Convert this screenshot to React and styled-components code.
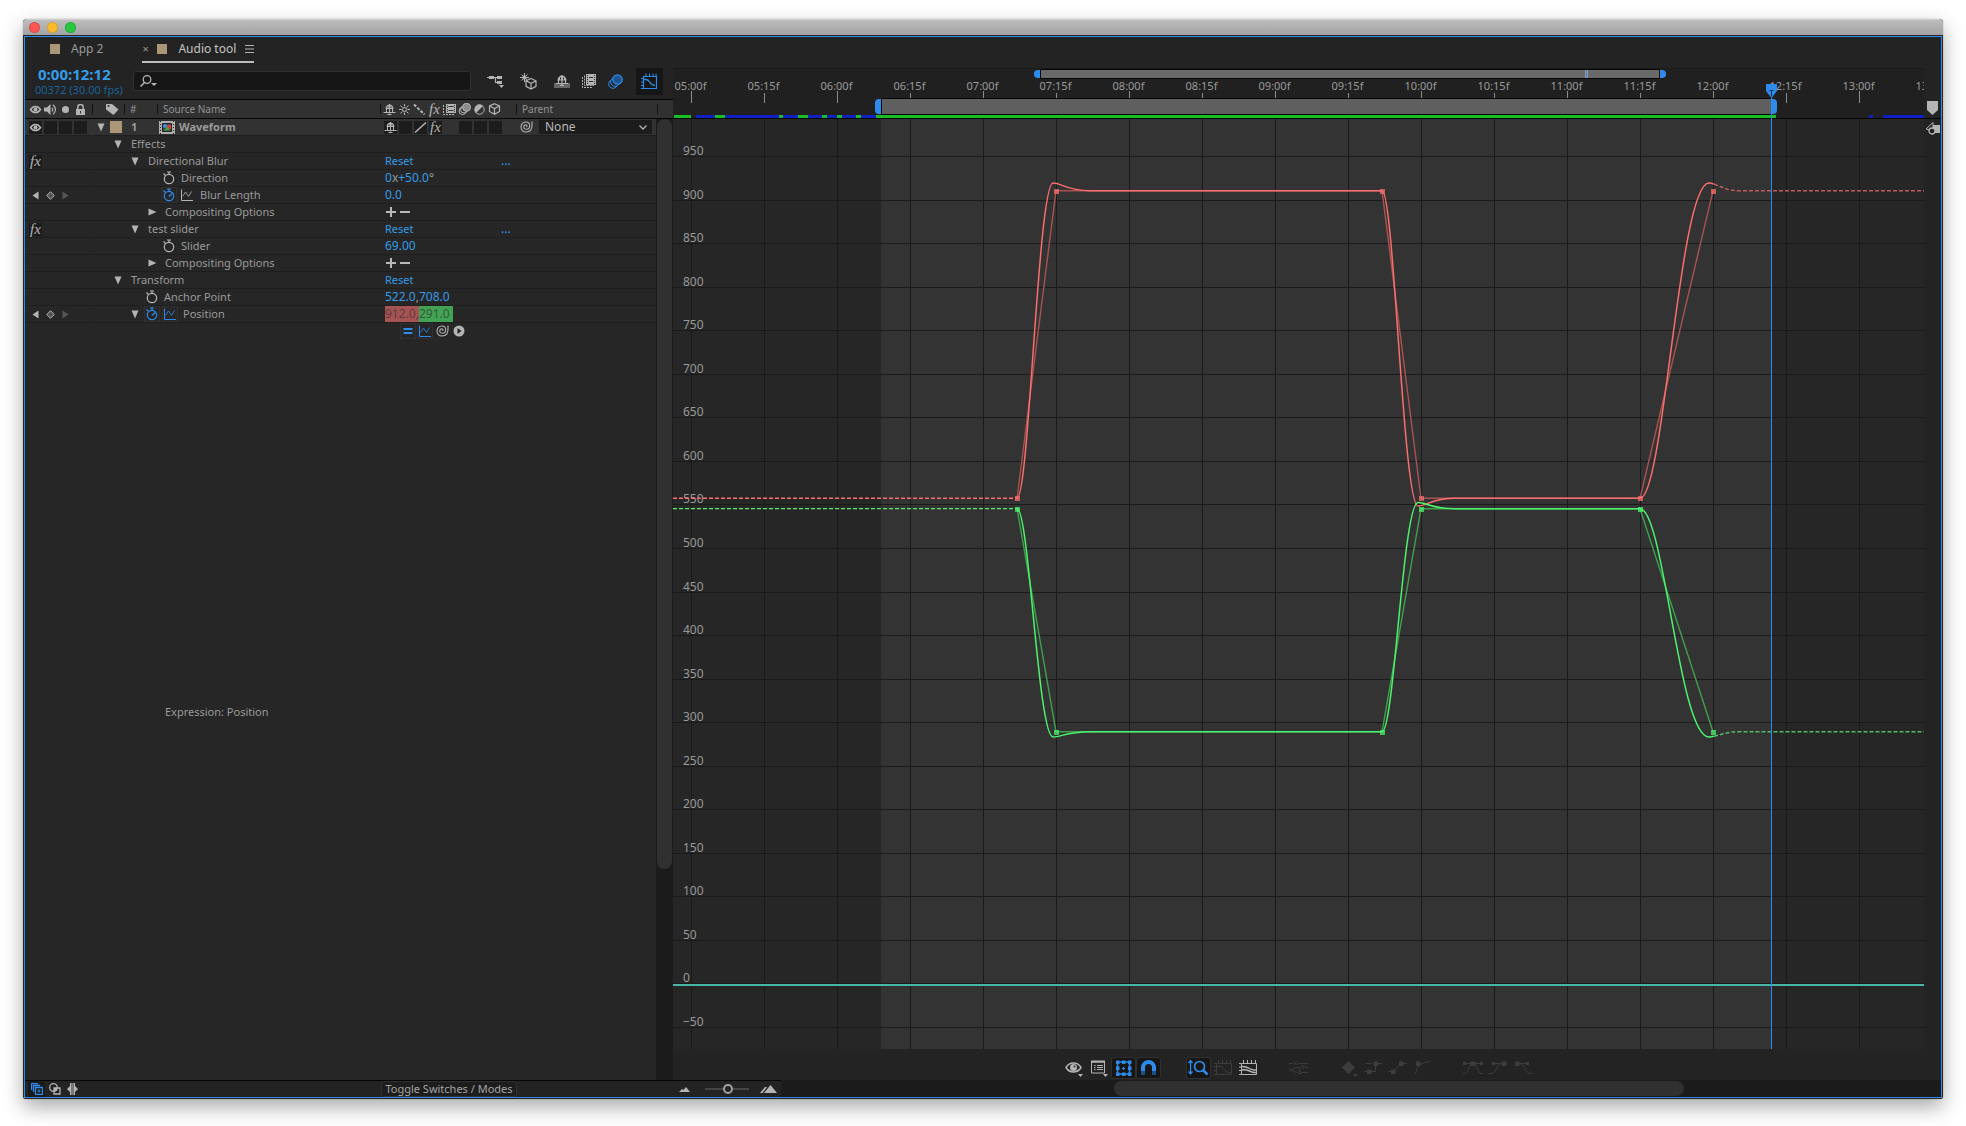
import React from "react";
import styled, { createGlobalStyle, css } from "styled-components";

const C = {
  blue: "#2d8ceb",
  value: "#349de8",
  icon: "#b4b4b4",
  text: "#9a9a9a",
  panel: "#232323",
  rows: "#262626",
  well: "#1d1d1d",
  label: "#ab9677",
};

const Global = createGlobalStyle`
  *, *::before, *::after { box-sizing: border-box; }
  body { margin: 0; background: #fff; font-family: "Noto Sans", "Open Sans", sans-serif; font-size: 12px; line-height: 16px; color: ${C.text}; }
  button, input, select { font: inherit; color: inherit; background: none; border: 0; padding: 0; margin: 0; }
  button { cursor: pointer; }
  svg { display: block; flex: none; }
`;

/* ---------- window ---------- */

const Page = styled.div`
  min-height: 100vh;
  display: flex;
  padding: 19px 23px 27px;
`;
const Win = styled.main`
  flex: 1;
  min-width: 0;
  display: flex;
  flex-direction: column;
  border-radius: 4px 4px 3px 3px;
  background: #2a2523;
  box-shadow: 0 0 1px rgba(0, 0, 0, 0.6), 0 8px 20px rgba(0, 0, 0, 0.34);
  overflow: hidden;
`;
const TitleBar = styled.header`
  height: 16px;
  display: flex;
  align-items: center;
  gap: 7px;
  padding-left: 6px;
  background: linear-gradient(#bdbdbd, #a2a2a2);
  border-top: 1px solid #cfcfcf;
`;
const Light = styled.button`
  width: 11px;
  height: 11px;
  border-radius: 50%;
  background: ${(p) => p.$c};
  box-shadow: inset 0 0 0 1px rgba(0, 0, 0, 0.14);
`;
const Panel = styled.section`
  flex: 1;
  display: flex;
  flex-direction: column;
  margin: 1px;
  border: 1px solid ${C.blue};
  background: ${C.panel};
  min-width: 0;
`;

/* ---------- tabs ---------- */

const Tabs = styled.nav`
  height: 26px;
  display: flex;
  align-items: flex-start;
  padding: 0 0 0 25px;
  gap: 39px;
`;
const Tab = styled.div`
  height: 26px;
  display: flex;
  align-items: center;
  color: ${(p) => (p.$on ? "#c4c4c4" : C.text)};
  border-bottom: 2px solid ${(p) => (p.$on ? "#bdbdbd" : "transparent")};
`;
const TabName = styled.button`
  display: flex;
  align-items: center;
  gap: 11px;
`;
const TabClose = styled.button`
  width: 15px;
  text-align: left;
  font-size: 11px;
  color: ${C.text};
`;
const TabMenu = styled.button`
  margin-left: 9px;
`;
const Swatch = styled.span`
  width: ${(p) => p.$s}px;
  height: ${(p) => p.$s}px;
  background: ${C.label};
  flex: none;
`;

/* ---------- body split ---------- */

const Body = styled.div`
  flex: 1;
  display: flex;
  min-height: 0;
`;
const Left = styled.div`
  width: 648px;
  flex: none;
  display: flex;
  flex-direction: column;
`;
const Right = styled.div`
  flex: 1;
  min-width: 0;
  display: flex;
  padding-top: 5px;
`;

/* ---------- left top tools ---------- */

const Tools = styled.div`
  height: 36px;
  display: flex;
  align-items: flex-start;
  padding-left: 10px;
`;
const Clock = styled.div`
  width: 98px;
  padding-top: 2px;
`;
const Timecode = styled.button`
  display: block;
  font-size: 15px;
  line-height: 18px;
  font-weight: 700;
  padding-left: 3px;
  color: ${C.value};
`;
const Frames = styled.div`
  font-size: 11px;
  line-height: 14px;
  color: #1a6299;
  white-space: nowrap;
`;
const Search = styled.label`
  margin-top: 8px;
  width: 338px;
  height: 20px;
  display: flex;
  align-items: center;
  gap: 6px;
  padding-left: 6px;
  background: #161616;
  border: 1px solid #303030;
  border-radius: 3px;
`;
const SearchInput = styled.input`
  flex: 1;
  min-width: 0;
  outline: none;
`;
const ToolSet = styled.div`
  margin-left: auto;
  padding-right: 10px;
  display: flex;
  align-items: center;
  height: 36px;
`;
const Tool = styled.button`
  width: ${(p) => p.$w || 27}px;
  height: 27px;
  display: grid;
  place-items: center;
  background: ${(p) => (p.$on ? "#161616" : "none")};
  margin-left: ${(p) => p.$gap || 0}px;
`;

/* ---------- layer list ---------- */

const ListHead = styled.div`
  height: 20px;
  border-top: 1px solid #050505;
  border-bottom: 1px solid #050505;
  background: #313131;
  display: flex;
  align-items: center;
  font-size: 10px;
  color: #949494;
`;
const HeadCell = styled.div`
  width: ${(p) => p.$w}px;
  height: 10px;
  display: flex;
  align-items: center;
  padding-left: ${(p) => p.$pad || 0}px;
  gap: ${(p) => p.$gap || 0}px;
  border-right: 1px solid #121212;
  flex: none;
`;
const ListBody = styled.div`
  flex: 1;
  display: flex;
  background: ${C.rows};
`;
const Rows = styled.div`
  flex: 1;
  min-width: 0;
  display: flex;
  flex-direction: column;
  font-size: 11px;
`;
const Row = styled.div`
  height: 17px;
  display: flex;
  align-items: stretch;
  background: ${(p) => (p.$main ? "#323232" : "transparent")};
`;
const cell = css`
  display: flex;
  align-items: center;
  border-bottom: 1px solid #1e1e1e;
`;
const AV = styled.div`
  ${cell}
  width: 67px;
  margin-right: 1px;
  padding-left: 4px;
  gap: 2px;
  flex: none;
`;
const Tree = styled.div`
  ${cell}
  width: 290px;
  padding-left: ${(p) => 2 + p.$depth * 17}px;
  flex: none;
`;
const Values = styled.div`
  ${cell}
  flex: 1;
  padding-left: ${(p) => (p.$main ? 1 : 2)}px;
  white-space: nowrap;
`;
const Box = styled.button`
  width: 13px;
  height: 13px;
  display: grid;
  place-items: center;
  background: ${(p) => (p.$empty ? "transparent" : "#1c1c1c")};
  flex: none;
`;
const Switches = styled.div`
  display: flex;
  gap: 2px;
  width: 136px;
  flex: none;
`;
const Twirl = styled.button`
  width: 12px;
  height: 16px;
  display: grid;
  place-items: center;
  visibility: ${(p) => (p.$hide ? "hidden" : "visible")};
  flex: none;
`;
const PropIcon = styled.button`
  width: 16px;
  height: 16px;
  display: grid;
  place-items: center;
  margin-left: ${(p) => p.$ml}px;
  border: 1px solid ${(p) => (p.$boxed ? "#303030" : "transparent")};
  flex: none;
`;
const Name = styled.span`
  margin-left: ${(p) => p.$ml}px;
  font-weight: ${(p) => (p.$bold ? 700 : 400)};
  white-space: nowrap;
`;
const LayerNo = styled.span`
  width: 28px;
  margin-left: 9px;
  font-weight: 700;
`;
const Value = styled.button`
  font-size: 12px;
  color: ${C.value};
`;
const Reset = styled.button`
  width: 116px;
  text-align: left;
  color: ${C.value};
`;
const Dim = styled.span`
  font-size: 12px;
  color: ${C.text};
`;
const Tint = styled.button`
  width: 34px;
  height: 16px;
  line-height: 16px;
  font-size: 12px;
  background: ${(p) => p.$bg};
  color: ${(p) => p.$fg};
  text-align: left;
`;
const More = styled.button`
  font-size: 12px;
  color: ${C.value};
`;
const Fx = styled.span`
  font: italic 15px/13px "Liberation Serif", serif;
  color: ${C.icon};
`;
const ParentSelect = styled.select`
  appearance: none;
  width: 113px;
  height: 14px;
  line-height: 14px;
  padding-left: 6px;
  font-size: 12px;
  color: #b8b8b8;
  background: #1c1c1c;
  border-radius: 0;
`;
const SelectWrap = styled.label`
  margin-left: 6px;
  display: grid;
  align-items: center;
  & > * { grid-area: 1 / 1; }
  & > svg { justify-self: end; margin-right: 5px; pointer-events: none; }
`;
const ExprTools = styled.div`
  height: 17px;
  display: flex;
  align-items: flex-start;
  gap: 1px;
  padding-left: 375px;
`;
const Expression = styled.div`
  flex: 1;
  display: flex;
  align-items: center;
  padding: 4px 0 0 140px;
`;
const VTrack = styled.div`
  width: 17px;
  background: #1b1b1b;
  border-left: 1px solid #1b1b1b;
  flex: none;
`;
const VThumb = styled.div`
  width: 15px;
  height: 78%;
  border-radius: 8px;
  background: #303030;
`;

/* ---------- timeline ---------- */

const Timeline = styled.div`
  position: relative;
  flex: 1;
  min-width: 0;
  display: flex;
  flex-direction: column;
  overflow: hidden;
`;
const Ruler = styled.div`
  position: relative;
  height: 51px;
  background: #202020;
  border-top: 1px solid #1a1a1a;
  border-bottom: 1px solid #050505;
  display: flex;
  flex-direction: column;
`;
const Ticks = styled.svg`
  position: absolute;
  inset: 0;
`;
const Navigator = styled.div`
  height: 10px;
  display: flex;
  align-items: center;
  position: relative;
  padding-left: 361px;
`;
const NavBar = styled.div`
  width: 620px;
  height: 10px;
  background: #696969;
  border: 1px solid #050505;
  padding-left: 544px;
`;
const NavMark = styled.div`
  width: 3px;
  height: 8px;
  background: ${C.blue};
  border: solid #999;
  border-width: 0 1px;
`;
const Grip = styled.div`
  width: 6px;
  height: ${(p) => p.$h}px;
  background: ${C.blue};
  border-radius: ${(p) => (p.$end ? "0 4px 4px 0" : "4px 0 0 4px")};
`;
const Labels = styled.div`
  position: relative;
  height: 19px;
  display: flex;
  margin-left: -19px;
  font-size: 11px;
  line-height: 14px;
`;
const Label = styled.span`
  width: 73px;
  flex: none;
  text-align: center;
`;
const WorkArea = styled.div`
  position: relative;
  height: 16px;
  display: flex;
  align-items: center;
  padding-left: 202px;
`;
const WorkBar = styled.div`
  width: 890px;
  height: 17px;
  background: #5f5f5f;
  border: solid #050505;
  border-width: 1px 0 1px 1px;
`;
const Cache = styled.div`
  position: relative;
  height: 4px;
  padding-top: 1px;
  display: flex;
`;
const CacheRun = styled.div`
  height: 3px;
  flex: none;
  background: ${(p) => ({ g: "#17bf25", b: "#1020c4", n: "#202020" })[p.$k]};
`;
const Plot = styled.div`
  flex: 1;
  background: ${C.rows};
  overflow: hidden;
  min-height: 0;
`;
const GraphTools = styled.div`
  height: 31px;
  display: flex;
  justify-content: center;
  gap: 2px;
  padding-top: 9px;
  background: ${C.panel};
`;
const Slot = styled.button`
  width: 23px;
  height: 20px;
  border-radius: 2px;
  background: ${(p) => (p.$on ? "#161616" : "none")};
  box-shadow: ${(p) => (p.$on ? "0 0 0 1px #303030" : "none")};
`;
const Blank = styled.span`
  width: 23px;
`;
const Playhead = styled.svg`
  position: absolute;
  left: 1092px;
  top: 16px;
  height: 100%;
`;
const Side = styled.div`
  width: 17px;
  flex: none;
  display: flex;
  flex-direction: column;
  align-items: center;
`;
const SideTop = styled.div`
  width: 17px;
  height: 51px;
  display: flex;
  align-items: flex-end;
  justify-content: center;
  padding-bottom: 3px;
  border-bottom: 1px solid #050505;
`;
const SideBottom = styled.button`
  margin-top: 3px;
`;

/* ---------- footer ---------- */

const Footer = styled.footer`
  height: 17px;
  display: flex;
`;
const FootLeft = styled.div`
  width: 756px;
  flex: none;
  border-top: 1px solid #050505;
  background: ${C.panel};
  display: flex;
  align-items: center;
`;
const FootIcon = styled.button`
  width: 17px;
  height: 16px;
  display: grid;
  place-items: center;
  background: ${(p) => (p.$on ? "#1a1a1a" : "none")};
`;
const FootIcons = styled.div`
  width: 356px;
  padding-left: 3px;
  display: flex;
  gap: 1px;
`;
const ModeButton = styled.button`
  width: 136px;
  height: 16px;
  line-height: 14px;
  background: ${C.well};
  border: 1px solid #303030;
  border-radius: 3px;
  font-size: 11px;
  color: #a5a5a5;
  white-space: nowrap;
`;
const ZoomSet = styled.div`
  margin-left: 162px;
  display: flex;
  align-items: center;
`;
const ZoomRange = styled.input`
  appearance: none;
  width: 44px;
  height: 12px;
  margin: 0 11px 0 15px;
  &::-webkit-slider-runnable-track { height: 2px; background: #444; }
  &::-webkit-slider-thumb {
    appearance: none;
    width: 10px;
    height: 10px;
    margin-top: -4px;
    border: 2px solid #a0a0a0;
    border-radius: 50%;
    background: ${C.panel};
  }
`;
const HTrack = styled.div`
  flex: 1;
  background: #1b1b1b;
  padding: 1px 0 1px 333px;
`;
const HThumb = styled.div`
  width: 570px;
  height: 15px;
  border-radius: 8px;
  background: #303030;
`;

/* ---------- icons ---------- */

const Svg = ({ w = 13, h = 13, c = C.icon, children }) => (
  <svg width={w} height={h} viewBox={`0 0 ${w} ${h}`} fill="none" stroke={c} color={c} aria-hidden="true">
    {children}
  </svg>
);
const F = { fill: "currentColor", stroke: "none" };

const Eye = () => (
  <Svg w={13} h={11}>
    <path d="M1.500 5.500C4 1.500 9 1.500 11.500 5.500C9 9.500 4 9.500 1.500 5.500Z" strokeWidth="1.500" />
    <circle cx="6.500" cy="5.500" r="2" {...F} />
  </Svg>
);
const Speaker = () => (
  <Svg w={13} h={11}>
    <path d="M0 3.500h3L6.500 0v11L3 7.500H0z" {...F} />
    <path d="M8 3.500q1.500 2 0 4M9 .8q5 4.700 0 9.400" strokeWidth="1.200" />
  </Svg>
);
const Solo = () => <Svg h={11}><circle cx="6.500" cy="5.500" r="3.500" {...F} /></Svg>;
const Lock = () => (
  <Svg w={13} h={11}>
    <path d="M2 5h9v6H2z" {...F} />
    <path d="M3.800 5V3a2.700 2.500 0 0 1 5.400 0v2" strokeWidth="1.500" />
    <path d="M6.500 7v2.500" stroke="#313131" />
  </Svg>
);
const Tag = () => (
  <Svg w={14} h={12}>
    <path d="M1 1h6l6.500 5.500L8.500 12L1 6.500z" {...F} />
    <circle cx="3.500" cy="3" r="1" fill="#313131" stroke="none" />
  </Svg>
);
const Shy = () => (
  <Svg w={13} h={11}>
    <path d="M2.500 5a4 4.500 0 0 1 8 0z" {...F} />
    <path d="M6.500 0v9.500M3.500 5v3M9.500 5v3M.5 8.500h12M4.500 10.500h4" />
    <path d="M5 2.500v1.500M8 2.500v1.500" stroke="#262626" />
  </Svg>
);
const Sun = () => (
  <Svg w={13} h={11}>
    <circle cx="6.500" cy="5.500" r="2" />
    <path d="M6.500 0v2.500M6.500 8.500V11M1 5.500h2.500M9.500 5.500H12M2.500 1.500l2 2M10.500 1.500l-2 2M2.500 9.500l2-2M10.500 9.500l-2-2" />
  </Svg>
);
const DotLine = () => <Svg h={11}><path d="M1 .5l10.500 10" strokeWidth="2" strokeDasharray="3 1.500" /></Svg>;
const Slash = () => <Svg h={11}><path d="M1 10.500L12 .5" strokeWidth="1.500" /></Svg>;
const Film = () => (
  <Svg w={13} h={11}>
    <path d="M3 0h10v9H3z" {...F} />
    <path d="M.5 1v9.500H11" strokeDasharray="2 1" />
    <path d="M5.500 2.500h5M5.500 6.500h5" stroke="#313131" />
    <path d="M4.500 1v7M11.500 1v7" stroke="#313131" strokeDasharray="1 1" />
  </Svg>
);
const Blur = () => (
  <Svg w={13} h={12}>
    <circle cx="4.500" cy="8" r="3.500" /><circle cx="6" cy="6.500" r="3.500" />
    <circle cx="8.500" cy="4.300" r="4" fill="#8a8a8a" />
  </Svg>
);
const Half = () => (
  <Svg h={11}>
    <circle cx="6.500" cy="5.500" r="4.700" />
    <path d="M3 8.900A4.800 4.800 0 1 1 10 2.100z" {...F} />
  </Svg>
);
const Cube = () => (
  <Svg h={12}>
    <path d="M6.500 .7l5 2.300v5.500l-5 2.800l-5-2.800V3zM1.500 3l5 2.500l5-2.500M6.500 5.500v5.800" strokeWidth="1.200" />
  </Svg>
);
const Spiral = () => (
  <Svg w={13} h={12}>
    <path d="M12 .5v3.500C12 8.500 9.500 11 6 11C3 11 1 9 1 6C1 3 3.200 1 5.800 1C8.200 1 9.700 2.800 9.700 4.800C9.700 7 8.300 8.300 6.500 8.300C4.800 8.300 3.700 7.300 3.800 5.800C3.900 4.400 5 3.700 6 3.800C7 4 7.300 5 6.500 6" strokeWidth="1.100" />
  </Svg>
);
const Chevron = () => <Svg w={8} h={5}><path d="M.5 .5l3.500 3.500l3.500-3.500" strokeWidth="1.300" /></Svg>;
const TriDown = () => <Svg w={8} h={9}><path d="M.5 .5h7L4 8.500z" {...F} /></Svg>;
const TriRight = () => <Svg w={9} h={8}><path d="M.5 .5v7L8.500 4z" {...F} /></Svg>;
const Watch = ({ on }) => (
  <Svg w={14} h={14} c={on ? C.blue : C.icon}>
    <circle cx="7" cy="8" r="4.700" strokeWidth="1.200" />
    <path d="M5 1h4M7 1v2.500M1.500 2.500l2 2" strokeWidth="1.200" />
    {on && <path d="M7 8.500l3-3" strokeWidth="1.500" />}
  </Svg>
);
const MiniGraph = ({ on }) => (
  <Svg w={12} h={12} c={on ? C.blue : C.icon}>
    <path d="M.5 .5v11H12" />
    <path d="M1.500 7.500l3-4.500l3 4.500l3-5" strokeWidth="0.800" />
  </Svg>
);
const CompIcon = () => (
  <Svg w={16} h={13}>
    <path d="M0 0h16v13H0z" fill="#b0b0b0" stroke="none" />
    <path d="M1.500 0v13M14.500 0v13" stroke="#222" strokeDasharray="1 2" />
    <path d="M3.500 2.500h9v8h-9z" fill="#444" stroke="#222" />
    <circle cx="6" cy="5" r="2" fill="#3b8be8" stroke="none" />
    <path d="M8 4h4v4H8z" fill="#e03c3c" stroke="none" />
    <path d="M5 9.500l3-4l3 4z" fill="#36a83c" stroke="none" />
  </Svg>
);
const PlusMinus = () => (
  <Svg w={26} h={12} c="#b8b8b8"><path d="M1 6h10M6 1v10M15 6h10" strokeWidth="2" /></Svg>
);
const Equal = () => <Svg w={10} h={8} c={C.blue}><path d="M.5 2h9M.5 6h9" strokeWidth="2" /></Svg>;
const PlayDot = () => (
  <Svg w={12} h={12}><circle cx="6" cy="6" r="5.500" {...F} /><path d="M4.500 3v6l4-3z" fill="#222" stroke="none" /></Svg>
);
const KeyNavIcons = () => (
  <>
    <Box $empty aria-label="Previous keyframe"><Svg w={7} h={9}><path d="M6.500 .5v8L.5 4.500z" {...F} /></Svg></Box>
    <Box $empty aria-label="Toggle keyframe"><Svg w={9} h={9}><path d="M4.500 .7l3.800 3.800l-3.800 3.800L.7 4.500z" fill="#555" /></Svg></Box>
    <Box $empty aria-label="Next keyframe"><Svg w={7} h={9} c="#555"><path d="M.5 .5v8l6-4z" {...F} /></Svg></Box>
  </>
);

/* ---------- layer rows ---------- */

const Fold = ({ open, hide }) => (
  <Twirl $hide={hide} aria-label="Twirl">{open ? <TriDown /> : <TriRight />}</Twirl>
);
const ResetMore = ({ more }) => (
  <>
    <Reset>Reset</Reset>
    {more && <More aria-label="More">...</More>}
  </>
);

const PROPS = [
  { name: "Effects", depth: 1, open: true },
  { name: "Directional Blur", depth: 2, open: true, fx: true, value: <ResetMore more /> },
  { name: "Direction", depth: 3, watch: "off", value: <Value>0<Dim>x</Dim>+50.0<Dim>°</Dim></Value> },
  { name: "Blur Length", depth: 3, watch: "on", graph: "off", keys: true, value: <Value>0.0</Value> },
  { name: "Compositing Options", depth: 3, open: false, value: <PlusMinus /> },
  { name: "test slider", depth: 2, open: true, fx: true, value: <ResetMore more /> },
  { name: "Slider", depth: 3, watch: "off", value: <Value>69.00</Value> },
  { name: "Compositing Options", depth: 3, open: false, value: <PlusMinus /> },
  { name: "Transform", depth: 1, open: true, value: <ResetMore /> },
  { name: "Anchor Point", depth: 2, watch: "off", value: <><Value>522.0</Value><Dim>,</Dim><Value>708.0</Value></> },
  {
    name: "Position", depth: 2, open: true, watch: "on", graph: "on", keys: true,
    value: <><Tint $bg="#a65353" $fg="#5e3c3c">912.0,</Tint><Tint $bg="#43a355" $fg="#335c3b">291.0</Tint></>,
  },
];

const PropRow = ({ p }) => (
  <Row>
    <AV>
      {p.fx && <Box aria-label="Effect on"><Fx>fx</Fx></Box>}
      {p.keys && <KeyNavIcons />}
    </AV>
    <Tree $depth={p.depth}>
      <Fold open={p.open} hide={p.open === undefined} />
      {p.watch && <PropIcon $ml={3} $boxed={p.watch === "on"} aria-label="Stopwatch"><Watch on={p.watch === "on"} /></PropIcon>}
      {p.graph && <PropIcon $ml={2} $boxed={p.graph === "on"} aria-label="Show in graph"><MiniGraph on={p.graph === "on"} /></PropIcon>}
      <Name $ml={p.graph ? 5 : p.watch ? 4 : 7}>{p.name}</Name>
    </Tree>
    <Values>{p.value}</Values>
  </Row>
);

/* ---------- graph ---------- */

const STEP = 73;
const fx = (frame) => 18 + ((frame - 150) * STEP) / 15;
const gridY = (v) => Math.round(37 + (950 - v) * 0.871);
const curveY = (v) => 38.7 + (950 - v) * 0.871;

const LABELS = Array.from({ length: 18 }, (_, i) => {
  const s = 5 + Math.floor(i / 2);
  return `${String(s).padStart(2, "0")}:${i % 2 ? "15" : "00"}f`;
});

const FR = [217, 225, 292, 300, 345, 360];
const settle = (x, peak, rest) => `C${x + 8} ${peak} ${x + 14} ${rest} ${x + 37} ${rest}`;

function channel(low, high, over, under) {
  const [a, , c, , e, f] = FR.map(fx);
  const L = curveY(low);
  const H = curveY(high);
  const p1 = a + 36;
  const p2 = c + 36;
  const p3 = f - 4;
  return {
    solid:
      `M${a} ${L}C${a + 12} ${L} ${p1 - 15} ${over} ${p1} ${over}${settle(p1, over, H)}H${c}` +
      `C${c + 12} ${H} ${p2 - 15} ${under} ${p2} ${under}${settle(p2, under, L)}H${e}` +
      `C${e + 24} ${L} ${p3 - 30} ${over} ${p3} ${over}Q${p3 + 2} ${over} ${p3 + 5} ${over + (H - over) * 0.15}`,
    tail: `M${p3 + 5} ${over + (H - over) * 0.15}C${p3 + 14} ${over + (H - over) * 0.5} ${p3 + 18} ${H} ${p3 + 30} ${H}H3000`,
    head: `M0 ${L}H${a}`,
    keys: [low, high, high, low, low, high].map((v, i) => [fx(FR[i]), curveY(v)]),
  };
}
const RED = { ...channel(559, 912, 64, 387), hi: "#fa6e6e", lo: "#a85353", tail: "#bd5c5c" };
const GREEN = { ...channel(547, 291, 618, 383.5), hi: "#4cf26c", lo: "#3f9f50", tail: "#54b866" };
RED.tailPath = channel(559, 912, 64, 387).tail;
GREEN.tailPath = channel(547, 291, 618, 383.5).tail;

const Channel = ({ ch }) => (
  <g fill="none">
    <polyline points={ch.keys.map((k) => k.join(",")).join(" ")} stroke={ch.lo} strokeWidth="1.400" />
    <path d={ch.head} stroke={ch.hi} strokeWidth="1.300" strokeDasharray="4 2" />
    <path d={ch.tailPath} stroke={ch.tail} strokeWidth="1.500" strokeDasharray="4 2" />
    <path d={ch.solid} stroke={ch.hi} strokeWidth="1.500" />
    {ch.keys.map(([x, y]) => (
      <rect key={x} x={Math.round(x) - 2} y={Math.round(y) - 2} width="5" height="5" fill={ch.hi} fillOpacity="0.75" />
    ))}
  </g>
);

const Graph = () => (
  <svg width="100%" height="100%" role="img" aria-label="Value graph for Position">
    <rect x="208" y="0" width="890" height="100%" fill="#333" />
    {Array.from({ length: 30 }, (_, i) => (
      <rect key={i} x={18 + i * STEP} y="0" width="1" height="100%" fill="#1a1a1a" />
    ))}
    {Array.from({ length: 21 }, (_, i) => 950 - i * 50).map((v) => (
      <g key={v}>
        <rect x="0" y={gridY(v)} width="100%" height="1" fill="#1a1a1a" />
        <text x="10" y={gridY(v) - 1} fill="#999" fontSize="12">{v < 0 ? `−${-v}` : v}</text>
      </g>
    ))}
    <rect x="0" y="865" width="100%" height="2" fill="#48b5a6" />
    <Channel ch={RED} />
    <Channel ch={GREEN} />
  </svg>
);

const CACHE = [
  ["n", 1], ["g", 17], ["n", 5], ["b", 19], ["g", 10], ["b", 54], ["g", 4], ["b", 15], ["g", 10], ["b", 14], ["g", 5],
  ["b", 10], ["g", 5], ["b", 14], ["g", 5], ["b", 15], ["g", 900], ["n", 93], ["b", 4], ["n", 10], ["b", 400],
];

/* ---------- graph toolbar ---------- */

const caret = <path d="M16 16h5l-2.500 3z" {...F} />;
const frame = (
  <path d="M4.500 5.500h15v11h-15zM2 5.500h2.500M2 9h2.500M2 12.500h2.500M2 16.500h2.500M6.500 2v3M10.500 2v3M14.500 2v3M18.500 2v3" />
);
const handles = (x0, x1) => (
  <>
    <path d={`M${x0} 5.500H${x1}`} />
    <rect x={x0 - 1} y="4" width="3" height="3" {...F} />
    <rect x={x1 - 2} y="4" width="3" height="3" {...F} />
  </>
);
const GRAPH_TOOLS = [
  { t: "Show properties", d: <><path d="M4 9.500C7.500 3.500 15.500 3.500 19 9.500C15.500 15.500 7.500 15.500 4 9.500Z" strokeWidth="1.500" /><circle cx="11.500" cy="9.500" r="3.500" {...F} /><circle cx="12.500" cy="8.500" r="1" fill="#333" stroke="none" />{caret}</> },
  { t: "Graph type", d: <><path d="M4.500 4h13v11h-13z" /><path d="M4 3.500h14" strokeWidth="2" /><path d="M7 7.500h1.500M7 9.500h1.500M7 11.500h1.500M10 7.500h6M10 9.500h6M10 11.500h6" />{caret}</> },
  { t: "Transform box", on: 1, d: <><path d="M5.500 4h12v12h-12z" strokeWidth="1.500" />{[4, 10, 16].map((x) => [2.5, 8.5, 14.5].map((y) => (x === 10 && y === 8.5 ? null : <rect key={`${x}-${y}`} x={x} y={y} width="3.500" height="3.500" {...F} />)))}<path d="M10 10.500h3M11.500 9v3" /></> },
  { t: "Snap", on: 1, d: <><path d="M6 13V9.500a5.500 5.500 0 0 1 11 0V13" strokeWidth="4" /><path d="M6 13v4M17 13v4" stroke="#1b4f85" strokeWidth="4" /></> },
  null,
  { t: "Auto-zoom height", on: 1, d: <><path d="M3.500 3v12M1.500 5l2-2.500l2 2.500M1.500 13.500l2 2.500l2-2.500" strokeWidth="1.300" /><circle cx="12.500" cy="8.500" r="5" strokeWidth="1.700" /><path d="M16 12l4.500 4.500" strokeWidth="2.500" /></> },
  { t: "Fit selection", off: 1, d: <>{frame}<path d="M4.500 8.500h4q2 0 4 3t4 3h3" /></> },
  { t: "Fit all", d: <>{frame}<path d="M4.500 8.500q5 0 8 2t7 1.500M4.500 12q4-1 8 1t7 1.500" strokeWidth="1.500" /></> },
  null,
  { t: "Separate dimensions", off: 1, d: <><path d="M2 5.500h4M11 5.500h10M2 13.500q5-5 10-4h2M18 9.500h3M2 9.500q4 5 8 5M14 14.500h7" /><path d="M7 3l3 4M10 3l-3 4M14.500 7l1.500 2l1.500-2M16 9v2M11 12h3l-3 3.500h3" /></> },
  null,
  { t: "Edit keyframe", off: 1, d: <><path d="M11.500 3l6.500 6.500L11.500 16L5 9.500z" {...F} />{caret}</> },
  { t: "Hold", off: 1, d: <><path d="M4 5.500h5.500M7 13.500h6.500V5.500H20M2 13.500h3" /><rect x="5" y="11.500" width="4.500" height="4.500" {...F} /><rect x="11.500" y="3.500" width="4.500" height="4.500" {...F} /></> },
  { t: "Linear", off: 1, d: <><path d="M1 13.500h5L14.500 5.500H20" /><rect x="4" y="11.500" width="4.500" height="4.500" {...F} /><rect x="12" y="3.500" width="4.500" height="4.500" {...F} /></> },
  { t: "Auto Bezier", off: 1, d: <><path d="M3.500 16q1-12 15.500-12.500" /><rect x="4" y="3.500" width="4.500" height="4.500" {...F} /></> },
  null,
  { t: "Easy Ease", off: 1, d: <>{handles(2, 20)}<rect x="8.500" y="3.500" width="5" height="4.500" {...F} /><path d="M1 15.500h2c4 0 3-10 8-10s4 10 8 10h2" /></> },
  { t: "Easy Ease In", off: 1, d: <>{handles(6, 18)}<rect x="15" y="3.500" width="4.500" height="4.500" {...F} /><path d="M2 15.500h2c6 0 5-10 11-10" /></> },
  { t: "Easy Ease Out", off: 1, d: <>{handles(4, 16)}<rect x="3" y="3.500" width="4.500" height="4.500" {...F} /><path d="M20.500 15.500h-2c-6 0-5-10-11-10" /></> },
];

export default function App() {
  return (
    <>
      <Global />
      <Page>
        <Win>
          <TitleBar>
            <Light $c="#fc5753" aria-label="Close" />
            <Light $c="#fdbc2e" aria-label="Minimise" />
            <Light $c="#27c93f" aria-label="Zoom" />
          </TitleBar>
          <Panel>
            <Tabs>
              <Tab><TabName><Swatch $s={10} />App 2</TabName></Tab>
              <Tab $on>
                <TabClose aria-label="Close tab">×</TabClose>
                <TabName><Swatch $s={10} />Audio tool</TabName>
                <TabMenu aria-label="Panel menu"><Svg w={9} h={8}><path d="M0 .5h9M0 4h9M0 7.500h9" /></Svg></TabMenu>
              </Tab>
            </Tabs>
            <Body>
              <Left>
                <Tools>
                  <Clock>
                    <Timecode>0:00:12:12</Timecode>
                    <Frames>00372 (30.00 fps)</Frames>
                  </Clock>
                  <Search>
                    <Svg w={17} h={12}>
                      <circle cx="7" cy="4.500" r="3.800" strokeWidth="1.300" />
                      <path d="M4.500 7.500L.5 11.500" strokeWidth="1.500" />
                      <path d="M11 8h6l-3 3z" {...F} />
                    </Svg>
                    <SearchInput type="text" aria-label="Search layers" />
                  </Search>
                  <ToolSet>
                    <Tool $w={26} aria-label="Composition flowchart">
                      <Svg w={17} h={13}>
                        <path d="M0 2.500h11M8.500 2.500v5H11" strokeWidth="1.200" />
                        <path d="M2 1h5v3H2zM10 1h5v3h-5zM10 6h5v3h-5zM12 10h5l-2.500 3z" {...F} />
                      </Svg>
                    </Tool>
                    <Tool $w={40} aria-label="Draft 3D">
                      <Svg w={17} h={17}>
                        <path d="M4.500 0v9M0 4.500h9M1.500 1.500l6 6M7.500 1.500l-6 6" />
                        <circle cx="4.500" cy="4.500" r="2" {...F} />
                        <path d="M11 5.500l5 2.300v5.500l-5 2.800l-5-2.800V7.800zM6 7.800l5 2.500l5-2.500M11 10.300v5.800" strokeWidth="1.200" />
                      </Svg>
                    </Tool>
                    <Tool $w={28} aria-label="Hide shy layers">
                      <Svg w={16} h={13}>
                        <path d="M0 8h16v5H0z" fill="#666" stroke="none" />
                        <path d="M3.500 5.500a4.500 5 0 0 1 9 0z" {...F} />
                        <path d="M8 0v10M4.500 5v3M11.500 5v3M2 8.500h12M6 10.500h4" strokeWidth="1.200" />
                        <path d="M6.500 2.500v2M9.500 2.500v2" stroke="#262626" />
                      </Svg>
                    </Tool>
                    <Tool $w={26} aria-label="Frame blending">
                      <Svg w={14} h={14}>
                        <path d="M4 0h10v11H4z" {...F} />
                        <path d="M.5 3v10.500H10" strokeDasharray="2 1" />
                        <path d="M2.500 1.500v10H12" strokeDasharray="2 1" />
                        <path d="M7 3.500h4M7 7.500h4" stroke="#333" />
                        <path d="M5.500 1v9M12.500 1v9" stroke="#333" strokeDasharray="1 1" />
                      </Svg>
                    </Tool>
                    <Tool $w={26} aria-label="Motion blur">
                      <Svg w={15} h={15} c={C.blue}>
                        <circle cx="5" cy="10" r="4.300" /><circle cx="7" cy="8" r="4.300" fill="#232323" />
                        <circle cx="9.500" cy="5.500" r="4.700" fill="#1d5592" strokeWidth="1.200" />
                      </Svg>
                    </Tool>
                    <Tool $on $w={27} $gap={8} aria-label="Graph editor">
                      <Svg w={17} h={17} c={C.blue}>
                        <path d="M2.500 3.500h13v12h-13z" strokeWidth="1.200" />
                        <path d="M5 .5v3M8.500 .5v3M12 .5v3M15 .5v3M0 5.500h2.500M0 9h2.500M0 12.500h2.500M0 15.500h2.500" />
                        <path d="M3 6.500h2q2 0 4 3t5 3" strokeWidth="1.300" />
                      </Svg>
                    </Tool>
                  </ToolSet>
                </Tools>

                <ListHead>
                  <HeadCell $w={68} $pad={4} $gap={2}><Eye /><Speaker /><Solo /><Lock /></HeadCell>
                  <HeadCell $w={32} $pad={12}><Tag /></HeadCell>
                  <HeadCell $w={33} $pad={5}>#</HeadCell>
                  <HeadCell $w={223} $pad={5}>Source Name</HeadCell>
                  <HeadCell $w={136} $pad={2} $gap={2}>
                    <Shy /><Sun /><DotLine /><Box as="span" $empty><Fx>fx</Fx></Box><Film /><Blur /><Half /><Cube />
                  </HeadCell>
                  <HeadCell $w={141} $pad={5}>Parent</HeadCell>
                </ListHead>

                <ListBody>
                  <Rows>
                    <Row $main>
                      <AV>
                        <Box aria-label="Video"><Eye /></Box>
                        <Box aria-label="Audio" /><Box aria-label="Solo" /><Box aria-label="Lock" />
                      </AV>
                      <Tree $depth={0}>
                        <Fold open />
                        <Name $ml={3}><Swatch as="div" $s={12} /></Name>
                        <LayerNo>1</LayerNo>
                        <CompIcon />
                        <Name $ml={4} $bold>Waveform</Name>
                      </Tree>
                      <Values $main>
                        <Switches>
                          <Box aria-label="Shy"><Shy /></Box>
                          <Box aria-label="Collapse" />
                          <Box aria-label="Quality"><Slash /></Box>
                          <Box aria-label="Effects"><Fx>fx</Fx></Box>
                          <Box $empty as="span" />
                          <Box aria-label="Motion blur" />
                          <Box aria-label="Adjustment" />
                          <Box aria-label="3D" />
                        </Switches>
                        <Box $empty aria-label="Parent pick whip"><Spiral /></Box>
                        <SelectWrap>
                          <ParentSelect aria-label="Parent"><option>None</option></ParentSelect>
                          <Chevron />
                        </SelectWrap>
                      </Values>
                    </Row>
                    {PROPS.map((p, i) => <PropRow key={i} p={p} />)}
                    <ExprTools>
                      <PropIcon $ml={0} $boxed aria-label="Enable expression"><Equal /></PropIcon>
                      <PropIcon $ml={0} $boxed aria-label="Expression graph"><MiniGraph on /></PropIcon>
                      <PropIcon $ml={0} aria-label="Expression pick whip"><Spiral /></PropIcon>
                      <PropIcon $ml={0} aria-label="Expression language menu"><PlayDot /></PropIcon>
                    </ExprTools>
                    <Expression>Expression: Position</Expression>
                  </Rows>
                  <VTrack><VThumb /></VTrack>
                </ListBody>
              </Left>

              <Right>
                <Timeline>
                  <Ruler>
                    <Ticks width="100%" height="50">
                      {LABELS.map((l, i) => (
                        <rect key={l} x={18 + i * STEP} y={i % 2 ? 24 : 22} width="1" height={i % 2 ? 10 : 12} fill="#8c8c8c" />
                      ))}
                    </Ticks>
                    <Navigator>
                      <Grip $h={8} />
                      <NavBar><NavMark /></NavBar>
                      <Grip $h={8} $end />
                    </Navigator>
                    <Labels>{LABELS.map((l) => <Label key={l}>{l}</Label>)}</Labels>
                    <WorkArea>
                      <Grip $h={15} />
                      <WorkBar />
                      <Grip $h={15} $end />
                    </WorkArea>
                    <Cache>
                      {CACHE.map(([k, w], i) => <CacheRun key={i} $k={k} style={{ width: w }} />)}
                    </Cache>
                  </Ruler>
                  <Plot><Graph /></Plot>
                  <GraphTools>
                    {GRAPH_TOOLS.map((g, i) =>
                      g ? (
                        <Slot key={i} $on={g.on} aria-label={g.t}>
                          <Svg w={23} h={20} c={g.on ? C.blue : g.off ? "#3d3d3d" : C.icon}>{g.d}</Svg>
                        </Slot>
                      ) : (
                        <Blank key={i} />
                      )
                    )}
                  </GraphTools>
                  <Playhead width="13" aria-hidden="true">
                    <rect x="6" y="10" width="1" height="955" fill={C.blue} />
                    <path d="M1 0h11v7l-5.500 7L1 7z" fill={C.blue} />
                    <path d="M4.500 6.500h4M6.500 6.500v6" stroke="#16304c" />
                  </Playhead>
                </Timeline>
                <Side>
                  <SideTop>
                    <Svg w={11} h={14}><path d="M0 0h11v9l-5.500 5L0 9z" {...F} /></Svg>
                  </SideTop>
                  <SideBottom aria-label="Composition button">
                    <Svg w={15} h={13}>
                      <path d="M8 3h7v8H8z" {...F} />
                      <path d="M8 .5L1 7l7 2z" fill="#232323" />
                      <circle cx="7" cy="9" r="3" fill="#232323" strokeWidth="1.300" />
                    </Svg>
                  </SideBottom>
                </Side>
              </Right>
            </Body>

            <Footer>
              <FootLeft>
                <FootIcons>
                  <FootIcon $on aria-label="Layer switches pane">
                    <Svg w={12} h={12} c={C.blue}>
                      <path d="M4.500 4.500h7v7h-7zM2.500 9V2.500H9M.5 7V.5H7" strokeWidth="1.300" />
                      <path d="M6.500 8h3M8 6.500v3" />
                    </Svg>
                  </FootIcon>
                  <FootIcon aria-label="Transfer controls pane">
                    <Svg w={12} h={12}>
                      <circle cx="4.500" cy="4.500" r="3.800" strokeWidth="1.300" />
                      <path d="M5 5h6v6H5z" strokeWidth="1.300" /><path d="M5 5h3v3H5z" {...F} />
                    </Svg>
                  </FootIcon>
                  <FootIcon aria-label="In and out pane">
                    <Svg w={11} h={12}>
                      <path d="M3 0h5v12H3z" fill="#777" stroke="none" />
                      <path d="M3 0v3L0 6l3 3v3h1V0zM8 0v3l3 3l-3 3v3H7V0z" {...F} />
                    </Svg>
                  </FootIcon>
                </FootIcons>
                <ModeButton>Toggle Switches / Modes</ModeButton>
                <ZoomSet>
                  <Svg w={11} h={6}><path d="M0 6l3-3l1.500 1L7 1l4 5z" {...F} /></Svg>
                  <ZoomRange type="range" min="0" max="100" defaultValue="54" aria-label="Timeline zoom" />
                  <Svg w={17} h={8}><path d="M0 8L5 2l2 0L2.500 8zM4 8l6.500-8L17 8z" {...F} /></Svg>
                </ZoomSet>
              </FootLeft>
              <HTrack><HThumb /></HTrack>
            </Footer>
          </Panel>
        </Win>
      </Page>
    </>
  );
}
